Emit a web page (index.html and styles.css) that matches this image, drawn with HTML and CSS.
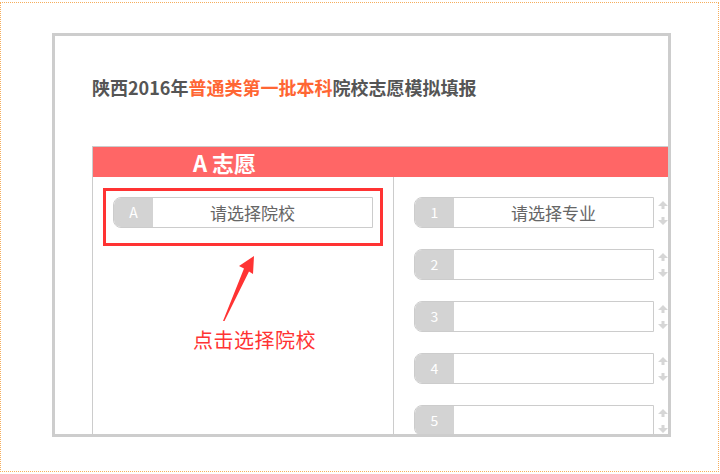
FILE: index.html
```html
<!DOCTYPE html>
<html>
	<head>
		<meta charset="utf-8">
		<title>志愿模拟填报</title>
		<link rel="stylesheet" href="styles.css">
	</head>
	<body>
		<div class="page">
			<div class="frame">
				<h1 class="title">陕西2016年<span class="hot">普通类第一批本科</span>院校志愿模拟填报</h1>

				<div class="board">
					<div class="board-head">A 志愿</div>
					<div class="board-body">
						<!-- 院校 -->
						<div class="col-school">
							<div class="pick-mark">
								<div class="select select-school">
									<span class="tag">A</span>
									<span class="value">请选择院校</span>
								</div>
							</div>
							<svg class="hint-arrow" width="45" height="72" viewBox="0 0 45 72">
								<polygon points="8,70 29,17.5 24,15 39,5 38,23 34,20.5 9.5,70" fill="#ff3333"/>
							</svg>
							<p class="hint">点击选择院校</p>
						</div>

						<!-- 专业 -->
						<ul class="col-major">
							<li class="row">
								<div class="select">
									<span class="tag">1</span>
									<span class="value">请选择专业</span>
								</div>
								<div class="move">
									<svg width="10" height="8" viewBox="0 0 10 8"><path d="M5 0 L10 5 H6.5 V8 H3.5 V5 H0 Z" fill="#d6d6d6"/></svg>
									<svg width="10" height="8" viewBox="0 0 10 8"><path d="M5 8 L10 3 H6.5 V0 H3.5 V3 H0 Z" fill="#d6d6d6"/></svg>
								</div>
							</li>
							<li class="row">
								<div class="select">
									<span class="tag">2</span>
									<span class="value"></span>
								</div>
								<div class="move">
									<svg width="10" height="8" viewBox="0 0 10 8"><path d="M5 0 L10 5 H6.5 V8 H3.5 V5 H0 Z" fill="#d6d6d6"/></svg>
									<svg width="10" height="8" viewBox="0 0 10 8"><path d="M5 8 L10 3 H6.5 V0 H3.5 V3 H0 Z" fill="#d6d6d6"/></svg>
								</div>
							</li>
							<li class="row">
								<div class="select">
									<span class="tag">3</span>
									<span class="value"></span>
								</div>
								<div class="move">
									<svg width="10" height="8" viewBox="0 0 10 8"><path d="M5 0 L10 5 H6.5 V8 H3.5 V5 H0 Z" fill="#d6d6d6"/></svg>
									<svg width="10" height="8" viewBox="0 0 10 8"><path d="M5 8 L10 3 H6.5 V0 H3.5 V3 H0 Z" fill="#d6d6d6"/></svg>
								</div>
							</li>
							<li class="row">
								<div class="select">
									<span class="tag">4</span>
									<span class="value"></span>
								</div>
								<div class="move">
									<svg width="10" height="8" viewBox="0 0 10 8"><path d="M5 0 L10 5 H6.5 V8 H3.5 V5 H0 Z" fill="#d6d6d6"/></svg>
									<svg width="10" height="8" viewBox="0 0 10 8"><path d="M5 8 L10 3 H6.5 V0 H3.5 V3 H0 Z" fill="#d6d6d6"/></svg>
								</div>
							</li>
							<li class="row">
								<div class="select">
									<span class="tag">5</span>
									<span class="value"></span>
								</div>
								<div class="move">
									<svg width="10" height="8" viewBox="0 0 10 8"><path d="M5 0 L10 5 H6.5 V8 H3.5 V5 H0 Z" fill="#d6d6d6"/></svg>
									<svg width="10" height="8" viewBox="0 0 10 8"><path d="M5 8 L10 3 H6.5 V0 H3.5 V3 H0 Z" fill="#d6d6d6"/></svg>
								</div>
							</li>
						</ul>
					</div>
				</div>
			</div>
		</div>
	</body>
</html>
```

FILE: styles.css
```css
* {
	margin: 0;
	padding: 0;
	box-sizing: border-box;
}

ul {
	list-style: none;
}

body {
	font-family: "Microsoft YaHei", "Noto Sans CJK SC", sans-serif;
	background: #ffffff;
}

/* 外层虚线框 */
.page {
	width: 719px;
	height: 470px;
	margin-top: 2px;
	border: 1px dotted #f6ae5c;
	padding: 30px 0 0 51px;
}

.frame {
	width: 619px;
	height: 404px;
	border: 3px solid #cdcdcd;
	padding-left: 37px;
	overflow: hidden;
}

.title {
	margin-top: 39px;
	font-size: 18px;
	line-height: 24px;
	font-weight: bold;
	color: #555555;
	white-space: nowrap;
}

.title .hot {
	color: #ff6633;
}

.board {
	width: 700px;
	margin-top: 47px;
	border-top: 1px solid #cccccc;
	border-left: 1px solid #cccccc;
}

.board-head {
	height: 30px;
	line-height: 30px;
	padding-left: 100px;
	background-color: #ff6666;
	color: #ffffff;
	font-size: 22px;
	font-weight: bold;
}

.board-body {
	display: flex;
}

.col-school {
	width: 301px;
	height: 300px;
	border-right: 1px solid #cccccc;
	padding: 11px 0 0 10px;
}

/* 红色提示框 */
.pick-mark {
	width: 280px;
	border: 3px solid #ff3333;
	padding: 6px 7px 15px;
}

.select {
	display: flex;
	width: 240px;
	height: 31px;
	border: 1px solid #cccccc;
	border-radius: 8px 0 0 8px;
	overflow: hidden;
	background: #ffffff;
}

.select-school {
	width: 260px;
}

.select .tag {
	width: 39px;
	flex: none;
	background-color: #d3d3d3;
	color: #ffffff;
	font-size: 14px;
	line-height: 29px;
	text-align: center;
}

.select .value {
	flex: 1;
	color: #666666;
	font-size: 17px;
	line-height: 29px;
	text-align: center;
}

.select-school .value {
	padding-right: 20px;
}

.hint-arrow {
	display: block;
	margin: 5px 0 0 112px;
}

.hint {
	margin: 5px 0 0 90px;
	color: #ff3333;
	font-size: 20px;
	line-height: 24px;
	letter-spacing: 0.5px;
}

.col-major {
	padding: 20px 0 0 20px;
}

.col-major .row {
	display: flex;
	margin-bottom: 21px;
}

.move {
	display: flex;
	flex-direction: column;
	justify-content: space-between;
	padding: 4px 0 3px;
	margin-left: 4px;
}

.move svg {
	display: block;
}
```
